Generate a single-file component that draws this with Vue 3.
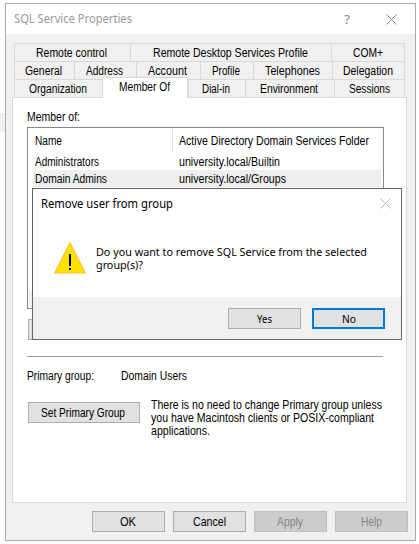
<script setup>
const tabRows = [
  [
    { label: 'Remote control', box: 116, text: 71 },
    { label: 'Remote Desktop Services Profile', box: 201, text: 155 },
    { label: 'COM+', box: 74, text: 30 }
  ],
  [
    { label: 'General', box: 60, text: 37 },
    { label: 'Address', box: 62, text: 37 },
    { label: 'Account', box: 64, text: 39 },
    { label: 'Profile', box: 53, text: 28 },
    { label: 'Telephones', box: 79, text: 55 },
    { label: 'Delegation', box: 73, text: 50 }
  ],
  [
    { label: 'Organization', box: 88, text: 58 },
    { label: 'Member Of', box: 86, text: 51, active: true },
    { label: 'Dial-in', box: 57, text: 28 },
    { label: 'Environment', box: 89, text: 58 },
    { label: 'Sessions', box: 71, text: 41 }
  ]
]

const members = [
  { name: 'Administrators', nameWidth: 64, folder: 'university.local/Builtin', folderWidth: 101 },
  { name: 'Domain Admins', nameWidth: 72, folder: 'university.local/Groups', folderWidth: 107, selected: true }
]

const actions = [
  { label: 'OK', text: 16 },
  { label: 'Cancel', text: 33 },
  { label: 'Apply', text: 26, disabled: true },
  { label: 'Help', text: 21, disabled: true }
]

const note = [
  { label: 'There is no need to change Primary group unless', text: 231 },
  { label: 'you have Macintosh clients or POSIX-compliant', text: 223 },
  { label: 'applications.', text: 59 }
]

// Condenses a label horizontally so that it takes the given width.
const vFit = {
  mounted(el, { value }) {
    const natural = el.getBoundingClientRect().width
    el.style.transform = `scaleX(${value / natural})`
    el.style.marginRight = `${value - natural}px`
  }
}
</script>

<template>
  <div class="desktop">
    <div class="strip"></div>
    <section class="window">
      <header class="titlebar">
        <span v-fit="118" class="fit segoe title">SQL Service Properties</span>
        <span class="fit segoe help">?</span>
        <svg class="close" width="11" height="11" viewBox="0 0 11 11"><path d="M.5 .5 10.5 10.5M10.5 .5 .5 10.5" /></svg>
      </header>

      <nav class="tabs">
        <div v-for="(row, i) in tabRows" :key="i" class="tab-row">
          <div
            v-for="tab in row"
            :key="tab.label"
            class="tab"
            :class="{ active: tab.active }"
            :style="{ width: tab.box + 'px' }"
          >
            <span v-fit="tab.text" class="fit">{{ tab.label }}</span>
          </div>
        </div>
      </nav>

      <main class="page">
        <div class="caption"><span v-fit="53" class="fit">Member of:</span></div>
        <div class="list">
          <div class="list-head">
            <div class="name"><span v-fit="27" class="fit">Name</span></div>
            <div class="folder"><span v-fit="190" class="fit">Active Directory Domain Services Folder</span></div>
          </div>
          <div v-for="m in members" :key="m.name" class="list-row" :class="{ selected: m.selected }">
            <div class="name"><span v-fit="m.nameWidth" class="fit">{{ m.name }}</span></div>
            <div class="folder"><span v-fit="m.folderWidth" class="fit">{{ m.folder }}</span></div>
          </div>
          <div class="scroll"></div>
        </div>
        <div class="edit-buttons">
          <div class="btn"></div>
          <div class="btn"></div>
        </div>
        <hr class="rule" />
        <div class="primary">
          <div class="primary-label"><span v-fit="67" class="fit">Primary group:</span></div>
          <span v-fit="66" class="fit">Domain Users</span>
        </div>
        <div class="set-primary">
          <button class="btn wide"><span v-fit="84" class="fit">Set Primary Group</span></button>
          <div class="note">
            <div v-for="line in note" :key="line.label"><span v-fit="line.text" class="fit">{{ line.label }}</span></div>
          </div>
        </div>
      </main>

      <footer class="actions">
        <button v-for="a in actions" :key="a.label" class="btn" :disabled="a.disabled">
          <span v-fit="a.text" class="fit">{{ a.label }}</span>
        </button>
      </footer>
    </section>

    <section class="dialog">
      <header class="dialog-title">
        <span v-fit="132" class="fit segoe">Remove user from group</span>
        <svg class="close pale" width="11" height="11" viewBox="0 0 11 11"><path d="M.5 .5 10.5 10.5M10.5 .5 .5 10.5" /></svg>
      </header>
      <div class="dialog-body">
        <svg width="32" height="33" viewBox="0 0 32 33">
          <path d="M16 1.8 31.2 32H.8Z" fill="#ffe100" stroke="#ffc01e" stroke-width="1.2" />
          <path d="M15 13h2v12h-2zM15 27h2v2h-2z" fill="#000" />
        </svg>
        <div class="message">
          <div><span v-fit="271" class="fit segoe small">Do you want to remove SQL Service from the selected</span></div>
          <div><span v-fit="47" class="fit segoe small">group(s)?</span></div>
        </div>
      </div>
      <footer class="dialog-actions">
        <button class="btn plain"><span v-fit="15" class="fit segoe small">Yes</span></button>
        <button class="btn plain default"><span v-fit="14" class="fit segoe small">No</span></button>
      </footer>
    </section>
  </div>
</template>

<style>
body {
  margin: 0;
  background: #fff;
}
</style>

<style scoped>
* {
  box-sizing: border-box;
}
.desktop {
  position: relative;
  display: flex;
  width: 419px;
  height: 544px;
  padding-top: 3px;
  overflow: hidden;
  background: #fff;
  color: #000;
  font: 12px/13px "Liberation Sans", sans-serif;
}
.strip {
  width: 5px;
  height: 19px;
  margin-top: 110px;
  background: #efefef;
}
.fit {
  display: inline-block;
  flex: none;
  white-space: nowrap;
  transform-origin: left center;
}
.segoe {
  font-family: "Noto Sans", sans-serif;
}
.small {
  font-size: 11px;
}
.window {
  width: 411px;
  height: 538px;
  border: 1px solid #aaa;
  background: #f0f0f0;
}
.titlebar {
  display: flex;
  align-items: center;
  height: 30px;
  padding: 0 18px 0 8px;
  background: #fff;
  color: #999;
}
.title {
  margin-bottom: 1px;
}
.help {
  margin-left: auto;
  padding-right: 36px;
  font-size: 13px;
  color: #888;
}
.close {
  fill: none;
  stroke: #888;
  stroke-width: 1;
}
.close.pale {
  stroke: #bbb;
}
.tabs {
  padding: 9px 10px 0 8px;
}
.tab-row {
  display: flex;
  height: 18px;
  border-right: 1px solid #d9d9d9;
}
.tab {
  display: flex;
  flex: none;
  justify-content: center;
  height: 18px;
  padding: 3px 2px 0 0;
  border-top: 1px solid #d9d9d9;
  border-left: 1px solid #d9d9d9;
}
.tab.active {
  position: relative;
  height: 21px;
  margin-top: -2px;
  border-right: 1px solid #d9d9d9;
  background: #fff;
}
.page {
  width: 395px;
  height: 406px;
  margin-left: 6px;
  padding: 13px 23px 0 14px;
  border: 1px solid #d9d9d9;
  background: #fff;
}
.caption {
  display: flex;
  height: 16px;
}
.list {
  display: flex;
  flex-direction: column;
  width: 357px;
  height: 182px;
  padding: 1px;
  border: 1px solid #828790;
}
.list-head {
  display: flex;
  height: 24px;
}
.list-head .name {
  border-right: 1px solid #e0e0e0;
}
.list-head .name,
.list-head .folder {
  padding-top: 6px;
}
.name {
  display: flex;
  width: 144px;
  padding-left: 6px;
}
.folder {
  display: flex;
  padding-left: 6px;
}
.list-row {
  display: flex;
  height: 17px;
  margin-right: 1px;
  padding-top: 3px;
}
.list-row.selected {
  margin-left: 4px;
  background: #eee;
}
.list-row.selected .name {
  width: 140px;
  padding-left: 2px;
}
.scroll {
  height: 16px;
  margin-top: auto;
  background: #f0f0f0;
}
.edit-buttons {
  display: flex;
  gap: 9px;
  padding: 10px 0 0 1px;
}
.btn {
  display: flex;
  flex: none;
  align-items: center;
  justify-content: center;
  width: 73px;
  height: 21px;
  margin: 0;
  padding: 2px 1px 0 0;
  border: 1px solid #adadad;
  background: #e1e1e1;
  color: #000;
  font: inherit;
}
.btn.plain {
  padding: 0;
}
.btn:disabled {
  border-color: #bfbfbf;
  background: #ccc;
  color: #858585;
}
.btn.default {
  border: 2px solid #0078d7;
}
.rule {
  width: 356px;
  height: 1px;
  margin: 16px 0 0;
  border: 0;
  background: #a0a0a0;
}
.primary {
  display: flex;
  padding-top: 13px;
}
.primary-label {
  display: flex;
  width: 94px;
}
.set-primary {
  display: flex;
  gap: 11px;
  padding: 15px 0 0 1px;
}
.btn.wide {
  width: 112px;
  margin-top: 4px;
  padding-right: 2px;
}
.note > div {
  display: flex;
}
.note {
  margin-top: 1px;
}
.actions {
  display: flex;
  gap: 8px;
  padding: 8px 0 0 86px;
}
.dialog {
  position: absolute;
  left: 32px;
  top: 188px;
  display: flex;
  flex-direction: column;
  width: 370px;
  height: 152px;
  border: 1px solid #666;
  background: #fff;
}
.dialog-title {
  display: flex;
  align-items: center;
  justify-content: space-between;
  height: 29px;
  padding: 0 10px 0 8px;
}
.dialog-body {
  display: flex;
  flex: 1;
  gap: 10px;
  padding: 23px 0 0 21px;
}
.message {
  padding-top: 4px;
}
.message > div {
  display: flex;
}
.dialog-actions {
  display: flex;
  gap: 11px;
  justify-content: flex-end;
  height: 42px;
  padding: 11px 16px 0 0;
  background: #f0f0f0;
}
</style>
